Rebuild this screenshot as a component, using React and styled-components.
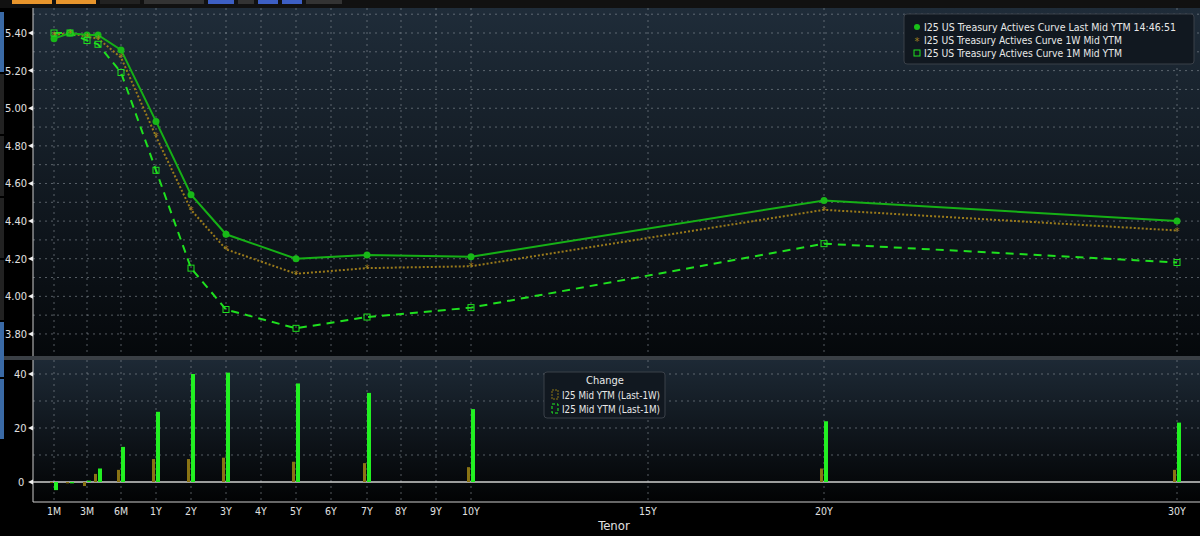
import React from "react";
import styled, { createGlobalStyle } from "styled-components";

const Global = createGlobalStyle`
  html, body { margin: 0; padding: 0; background: #000; }
  body { font-family: "DejaVu Sans", "Liberation Sans", sans-serif; }
`;

const Page = styled.div`
  width: 1200px; height: 536px; display: flex; flex-direction: column; background: #000; overflow: hidden;
`;
const TopBar = styled.div`
  height: 8px; display: flex; gap: 4px; align-items: flex-start; background: #111; padding-left: 12px;
`;
const Tab = styled.div`
  width: ${p => p.w}px; height: 4px; background: ${p => p.c};
`;
const Body = styled.div`
  flex: 1; display: flex;
`;
const Side = styled.div`
  width: 4px; display: flex; flex-direction: column; gap: 2px; padding-top: 4px;
`;
const SideBtn = styled.div`
  height: ${p => p.h}px; background: ${p => p.c};
`;
const Chart = styled.svg`
  flex: 1; display: block;
`;

const ticks = { "1M": 54, "2M": 70, "3M": 87, "4M": 98, "6M": 121, "1Y": 156, "2Y": 191, "3Y": 226, "4Y": 261, "5Y": 296, "6Y": 331, "7Y": 367, "8Y": 401, "9Y": 436, "10Y": 471, "15Y": 648, "20Y": 824, "30Y": 1177 };
const pts = ["1M","2M","3M","4M","6M","1Y","2Y","3Y","5Y","7Y","10Y","20Y","30Y"];
const last = [5.37,5.40,5.39,5.39,5.31,4.93,4.54,4.33,4.20,4.22,4.21,4.51,4.40];
const w1 = [5.39,5.40,5.38,5.37,5.27,4.85,4.46,4.25,4.12,4.15,4.16,4.46,4.35];
const m1 = [5.40,5.40,5.36,5.34,5.19,4.67,4.15,3.93,3.83,3.89,3.94,4.28,4.18];
const bw = [0,-0.5,-1.5,3,4.5,8.5,8.5,9,7.5,7,5.5,5,4.5];
const bm = [-3,-0.5,0.5,5,13,26,40,40.5,36.5,33,27,22.5,22];
const OX = 4;
const X = k => ticks[k] - OX;
const Y = v => 25 + (5.40 - v) * 188.1;
const YB = v => 474 - v * 2.7;
const line = arr => arr.map((v, i) => `${X(pts[i])},${Y(v)}`).join(" ");

const labels = ["1M","3M","6M","1Y","2Y","3Y","4Y","5Y","6Y","7Y","8Y","9Y","10Y","15Y","20Y","30Y"];

export default function App() {
  const yTicks = [];
  for (let v = 3.8; v <= 5.51; v += 0.1) yTicks.push(Math.round(v * 10) / 10);
  return (
    <Page>
      <Global />
      <TopBar>
        <Tab w={40} c="#e8952c" /><Tab w={40} c="#e8952c" />
        <Tab w={40} c="#222" /><Tab w={60} c="#333" />
        <Tab w={26} c="#3d5fc4" /><Tab w={16} c="#333" /><Tab w={20} c="#3d5fc4" /><Tab w={20} c="#3d5fc4" /><Tab w={36} c="#333" />
      </TopBar>
      <Body>
        <Side>
          <SideBtn h={60} c="#3a6aa6" /><SideBtn h={60} c="#222" /><SideBtn h={60} c="#222" />
          <SideBtn h={60} c="#222" /><SideBtn h={60} c="#222" /><SideBtn h={55} c="#3a6aa6" /><SideBtn h={60} c="#3a6aa6" />
        </Side>
        <Chart width="1196" height="528" viewBox="0 0 1196 528" fontFamily="'DejaVu Sans Condensed','DejaVu Sans',sans-serif">
          <defs>
            <linearGradient id="g1" x1="0" y1="0" x2="0" y2="1">
              <stop offset="0" stopColor="#1f2c39" /><stop offset="1" stopColor="#05080b" />
            </linearGradient>
            <linearGradient id="g2" x1="0" y1="0" x2="0" y2="1">
              <stop offset="0" stopColor="#1d2935" /><stop offset="1" stopColor="#020304" />
            </linearGradient>
          </defs>
          <rect x="29" y="0" width="1167" height="348" fill="url(#g1)" />
          <rect x="0" y="348" width="1196" height="4" fill="#3a3f45" />
          <rect x="29" y="352" width="1167" height="142" fill="url(#g2)" />
          {labels.map(k => <line key={k} x1={X(k)} x2={X(k)} y1="0" y2="348" stroke="#8a929a" strokeDasharray="2 4" opacity="0.6" />)}
          {yTicks.map(v => <line key={v} x1="29" x2="1196" y1={Y(v)} y2={Y(v)} stroke="#8a929a" strokeDasharray="2 4" opacity="0.6" />)}
          <line x1="29" x2="29" y1="0" y2="348" stroke="#ccc" />
          {[5.4,5.2,5.0,4.8,4.6,4.4,4.2,4.0,3.8].map(v => (
            <g key={v}>
              <text x="1" y={Y(v) + 4} fill="#e0e0e0" fontSize="11">{v.toFixed(2)}</text>
              <path d={`M24 ${Y(v)} L29 ${Y(v)-2.5} L29 ${Y(v)+2.5}Z`} fill="#eee" />
            </g>
          ))}
          <polyline points={line(m1)} fill="none" stroke="#1fe01f" strokeWidth="2" strokeDasharray="8 6" />
          <polyline points={line(w1)} fill="none" stroke="#9a7a1a" strokeWidth="2" strokeDasharray="2 2" />
          <polyline points={line(last)} fill="none" stroke="#16b016" strokeWidth="2" />
          {last.map((v, i) => <circle key={"l"+i} cx={X(pts[i])} cy={Y(v)} r="3.5" fill="#18b818" />)}
          {w1.map((v, i) => <text key={"w"+i} x={X(pts[i])} y={Y(v) + 4} fill="#a08020" fontSize="11" textAnchor="middle">*</text>)}
          {m1.map((v, i) => <rect key={"m"+i} x={X(pts[i]) - 3} y={Y(v) - 3} width="6" height="6" fill="none" stroke="#1fe01f" strokeWidth="1" />)}
          <rect x="900" y="6" width="290" height="50" rx="3" fill="#111820" stroke="#3a4048" />
          <circle cx="913" cy="19" r="3" fill="#18c018" />
          <text x="913" y="37" fill="#a08020" fontSize="11" textAnchor="middle">*</text>
          <rect x="910" y="42" width="6" height="6" fill="none" stroke="#1fe01f" />
          <g fill="#e8e8e8" fontSize="11">
            <text x="920" y="23" textLength="252" lengthAdjust="spacingAndGlyphs">I25 US Treasury Actives Curve Last Mid YTM 14:46:51</text>
            <text x="920" y="36" textLength="198" lengthAdjust="spacingAndGlyphs">I25 US Treasury Actives Curve 1W Mid YTM</text>
            <text x="920" y="49" textLength="198" lengthAdjust="spacingAndGlyphs">I25 US Treasury Actives Curve 1M Mid YTM</text>
          </g>
          {labels.map(k => <line key={"b"+k} x1={X(k)} x2={X(k)} y1="352" y2="494" stroke="#8a929a" strokeDasharray="2 4" opacity="0.6" />)}
          {[40,30,20,10].map(v => <line key={v} x1="29" x2="1196" y1={YB(v)} y2={YB(v)} stroke="#8a929a" strokeDasharray="2 4" opacity="0.6" />)}
          <line x1="29" x2="1196" y1={YB(0)} y2={YB(0)} stroke="#cfcfcf" strokeWidth="1.5" />
          <line x1="29" x2="29" y1="352" y2="494" stroke="#ccc" />
          <line x1="29" x2="1196" y1="494" y2="494" stroke="#ccc" />
          {[40,20,0].map(v => (
            <g key={"bl"+v}>
              <text x={v === 0 ? 14 : 10} y={YB(v) + 4} fill="#e0e0e0" fontSize="11">{v}</text>
              <path d={`M24 ${YB(v)} L29 ${YB(v)-2.5} L29 ${YB(v)+2.5}Z`} fill="#eee" />
            </g>
          ))}
          {pts.map((k, i) => {
            const x = X(k);
            const a = bw[i], b = bm[i];
            return (
              <g key={"bar"+k}>
                <rect x={x - 4} y={Math.min(YB(a), YB(0))} width="3" height={Math.max(1, Math.abs(a) * 2.7)} fill="#8a7414" />
                <rect x={x} y={Math.min(YB(b), YB(0))} width="4" height={Math.max(1, Math.abs(b) * 2.7)} fill="#22f022" />
              </g>
            );
          })}
          <rect x="540" y="364" width="121" height="46" rx="3" fill="#111820" stroke="#3a4048" />
          <text x="601" y="376" fill="#e8e8e8" fontSize="11" textAnchor="middle">Change</text>
          <rect x="548" y="382" width="6" height="9" fill="none" stroke="#8a7414" strokeDasharray="2 1" />
          <rect x="548" y="396" width="6" height="9" fill="none" stroke="#22f022" strokeDasharray="3 2" />
          <text x="558" y="391" fill="#e8e8e8" fontSize="11" textLength="98" lengthAdjust="spacingAndGlyphs">I25 Mid YTM (Last-1W)</text>
          <text x="558" y="405" fill="#e8e8e8" fontSize="11" textLength="98" lengthAdjust="spacingAndGlyphs">I25 Mid YTM (Last-1M)</text>
          {labels.map(k => <text key={"x"+k} x={X(k)} y="507" fill="#e0e0e0" fontSize="10.5" textAnchor="middle">{k}</text>)}
          <text x="610" y="522" fill="#e0e0e0" fontSize="13" textAnchor="middle">Tenor</text>
        </Chart>
      </Body>
    </Page>
  );
}
